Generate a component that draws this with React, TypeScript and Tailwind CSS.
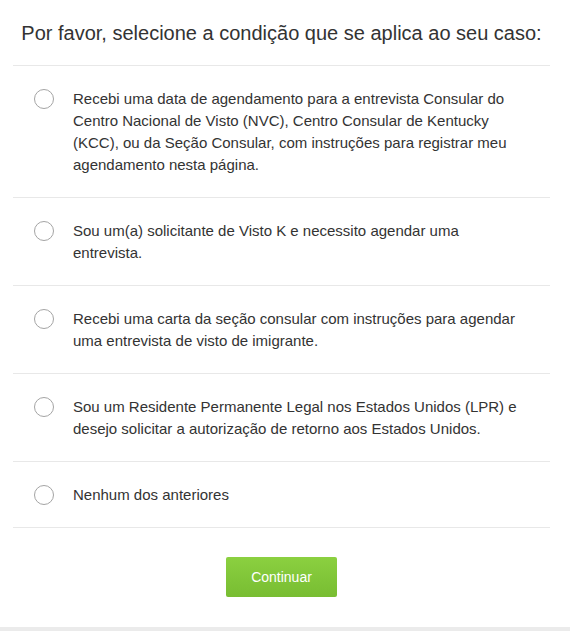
const OPTIONS = [
  'Recebi uma data de agendamento para a entrevista Consular do Centro Nacional de Visto (NVC), Centro Consular de Kentucky (KCC), ou da Seção Consular, com instruções para registrar meu agendamento nesta página.',
  'Sou um(a) solicitante de Visto K e necessito agendar uma entrevista.',
  'Recebi uma carta da seção consular com instruções para agendar uma entrevista de visto de imigrante.',
  'Sou um Residente Permanente Legal nos Estados Unidos (LPR) e desejo solicitar a autorização de retorno aos Estados Unidos.',
  'Nenhum dos anteriores',
];

export default function App() {
  return (
    <div className="w-[570px] h-[631px] bg-white flex flex-col font-['Liberation_Sans',Arial,sans-serif] text-[#333]">
      <div className="mx-[13px] w-[537px] flex-1">
        <h1 className="pt-[21px] pb-[20px] text-center text-[20px] leading-[24px] font-normal border-b border-[#e8e8e8]">
          Por favor, selecione a condição que se aplica ao seu caso:
        </h1>
        {OPTIONS.map((text, i) => (
          <label
            key={i}
            className="flex items-start pt-[22px] pb-[21px] pl-[21px] pr-[24px] border-b border-[#e8e8e8] cursor-pointer"
          >
            <span className="mt-[1px] w-[20px] h-[20px] shrink-0 rounded-full border-[1.5px] border-[#a4a4a4] bg-white" />
            <span className="ml-[19px] text-[15px] leading-[22px]">{text}</span>
          </label>
        ))}
        <div className="flex justify-center pt-[29px]">
          <button
            type="button"
            className="w-[111px] h-[40px] rounded-[2px] bg-gradient-to-b from-[#8bd040] to-[#78bd32] text-white text-[14px]"
          >
            Continuar
          </button>
        </div>
      </div>
      <div className="h-[4px] bg-[#ebebeb]" />
    </div>
  );
}
